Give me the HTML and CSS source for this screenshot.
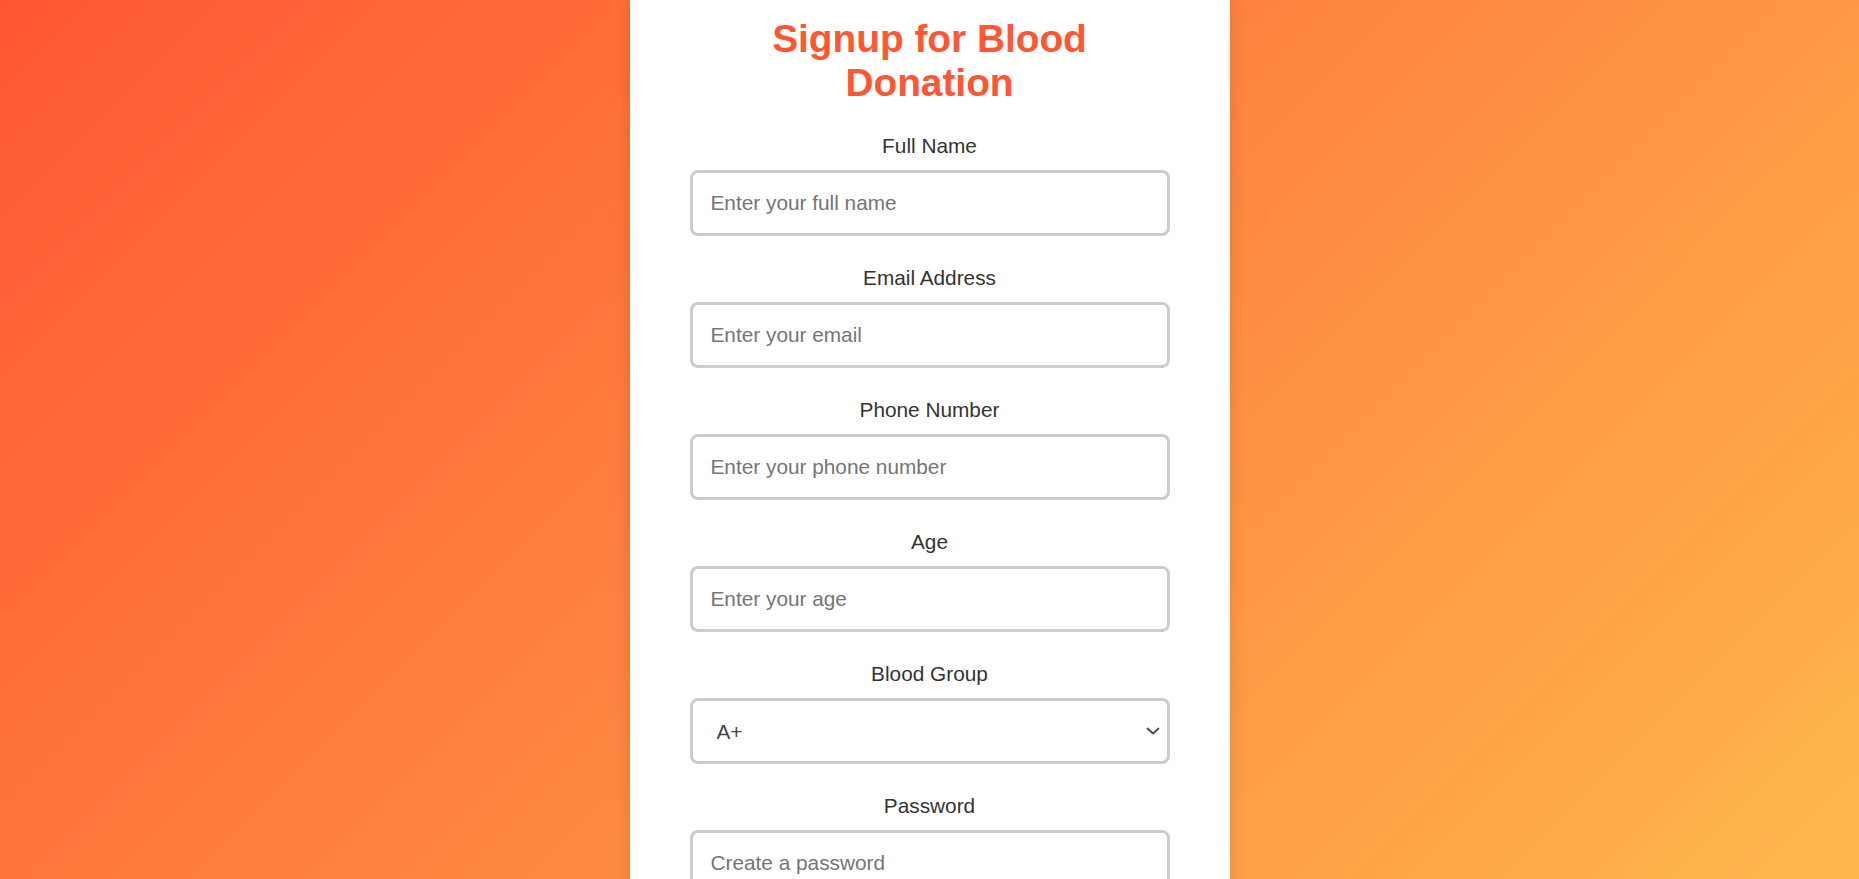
FILE: index.html
```html
<!DOCTYPE html>
<html lang="en">
<head>
<meta charset="UTF-8">
<title>Signup for Blood Donation</title>
<link rel="stylesheet" href="styles.css">
</head>
<body>
<div class="card">
  <h1 class="title">Signup for Blood Donation</h1>
  <form class="form">
    <div class="group">
      <label class="label" for="name">Full Name</label>
      <input class="field" id="name" type="text" placeholder="Enter your full name">
    </div>
    <div class="group">
      <label class="label" for="email">Email Address</label>
      <input class="field" id="email" type="email" placeholder="Enter your email">
    </div>
    <div class="group">
      <label class="label" for="phone">Phone Number</label>
      <input class="field" id="phone" type="tel" placeholder="Enter your phone number">
    </div>
    <div class="group">
      <label class="label" for="age">Age</label>
      <input class="field" id="age" type="number" placeholder="Enter your age">
    </div>
    <div class="group">
      <label class="label" for="blood">Blood Group</label>
      <div class="select-wrap">
        <select class="field select" id="blood">
          <option>A+</option>
          <option>A-</option>
          <option>B+</option>
          <option>B-</option>
          <option>AB+</option>
          <option>AB-</option>
          <option>O+</option>
          <option>O-</option>
        </select>
        <svg class="chevron" width="14" height="8" viewBox="0 0 14 8" aria-hidden="true">
          <path d="M1.5 1.5 L7 6.5 L12.5 1.5" fill="none" stroke="#4a4a4a" stroke-width="1.8" stroke-linecap="round" stroke-linejoin="round"/>
        </svg>
      </div>
    </div>
    <div class="group">
      <label class="label" for="password">Password</label>
      <input class="field" id="password" type="password" placeholder="Create a password">
    </div>
    <button class="submit" type="submit">Sign Up</button>
  </form>
</div>
</body>
</html>
```

FILE: styles.css
```css
html, body {
  margin: 0;
  padding: 0;
}

body {
  font-family: "Liberation Sans", Arial, sans-serif;
  background: linear-gradient(135deg, #ff5733, #ffb74d);
  background-attachment: fixed;
  min-height: 100vh;
}

.card {
  width: 600px;
  box-sizing: border-box;
  margin: 0 auto;
  padding: 17px 60px 40px;
  background: #ffffff;
  box-shadow: 0 0 18px rgba(0, 0, 0, 0.12);
}

.title {
  margin: 0 0 29px;
  font-size: 38.8px;
  font-weight: bold;
  color: #ff5733;
  text-align: center;
}

.form {
  display: flex;
  flex-direction: column;
}

.group {
  margin-bottom: 30px;
}

.label {
  display: block;
  text-align: center;
  font-size: 20.8px;
  color: #333333;
  margin-bottom: 12px;
}

.field {
  display: block;
  width: 100%;
  box-sizing: border-box;
  padding: 18px;
  border: 3px solid #cccccc;
  border-radius: 8px;
  font-family: "Liberation Sans", Arial, sans-serif;
  font-size: 20.8px;
  color: #333333;
  background: #ffffff;
  outline: none;
}

.field::placeholder {
  color: #757575;
}

.select-wrap {
  position: relative;
}

.select {
  -webkit-appearance: none;
  appearance: none;
  height: 66px;
  padding: 0 40px 0 24px;
  color: #444444;
}

.chevron {
  position: absolute;
  right: 10px;
  top: 50%;
  margin-top: -4px;
  pointer-events: none;
}

.submit {
  width: 100%;
  padding: 18px;
  border: none;
  border-radius: 8px;
  background: #ff5733;
  color: #ffffff;
  font-family: "Liberation Sans", Arial, sans-serif;
  font-size: 20.8px;
  font-weight: bold;
}
```
